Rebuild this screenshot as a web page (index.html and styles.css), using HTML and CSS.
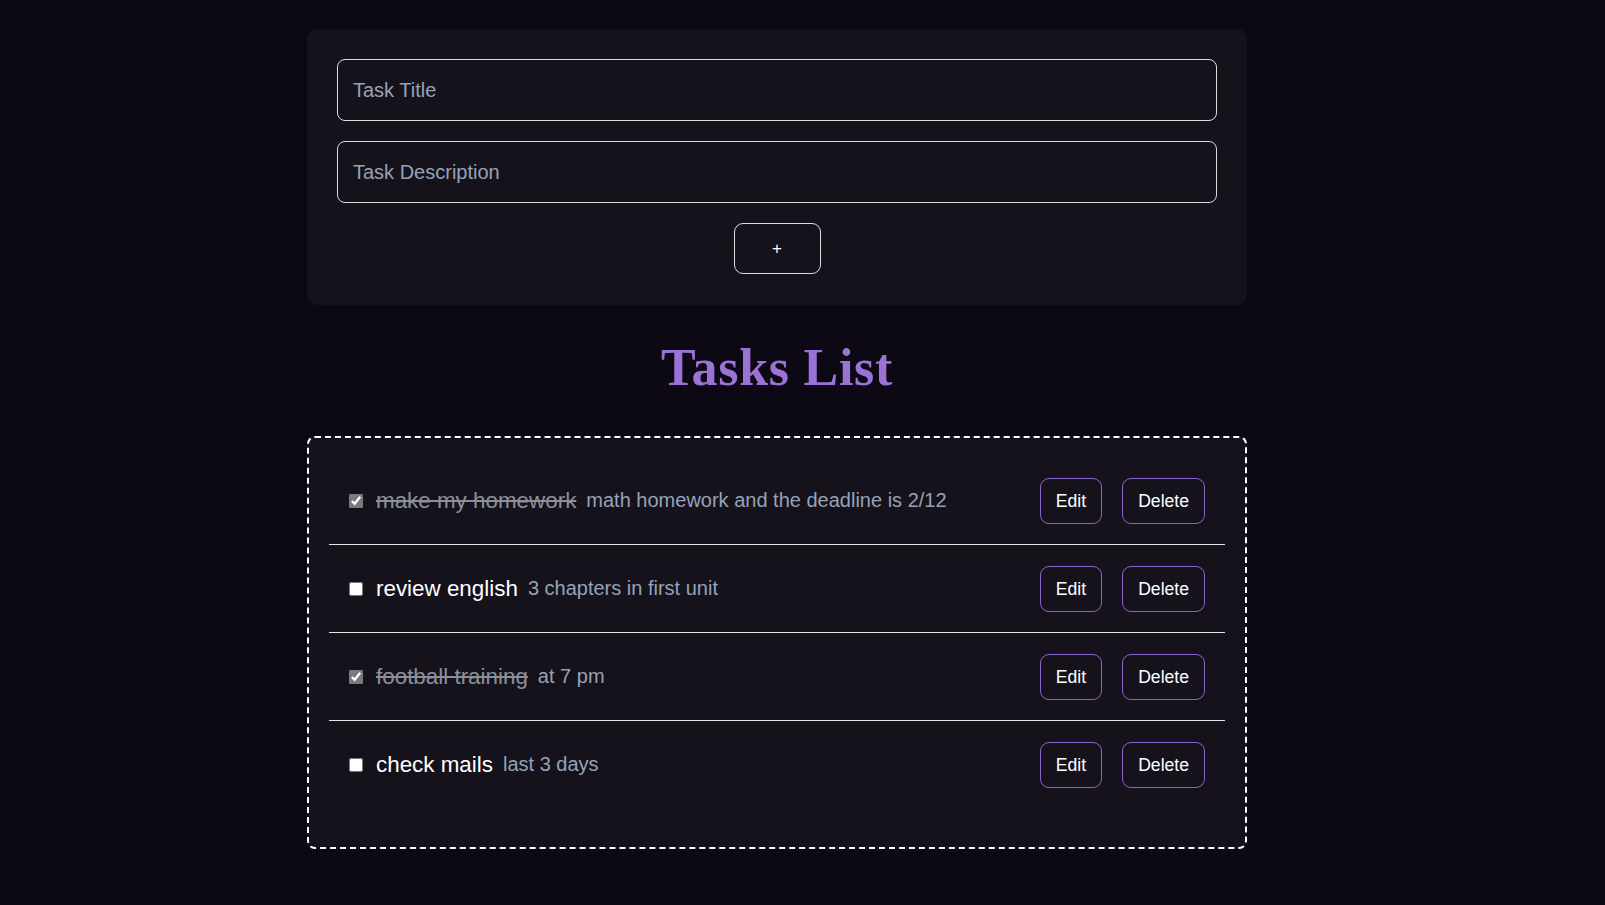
FILE: index.html
```html
<!DOCTYPE html>
<html lang="en">
<head>
<meta charset="UTF-8">
<title>Tasks</title>
<link rel="stylesheet" href="styles.css">
</head>
<body>
<div class="app">
  <form class="task-form">
    <input class="field" type="text" placeholder="Task Title">
    <input class="field" type="text" placeholder="Task Description">
    <button class="add-btn" type="button">+</button>
  </form>

  <h1 class="heading">Tasks List</h1>

  <ul class="task-list">
    <li class="task done">
      <div class="task-info">
        <input class="check" type="checkbox" checked>
        <span class="task-title">make my homework</span>
        <span class="task-desc">math homework and the deadline is 2/12</span>
      </div>
      <div class="actions">
        <button class="btn" type="button">Edit</button>
        <button class="btn" type="button">Delete</button>
      </div>
    </li>
    <li class="task">
      <div class="task-info">
        <input class="check" type="checkbox">
        <span class="task-title">review english</span>
        <span class="task-desc">3 chapters in first unit</span>
      </div>
      <div class="actions">
        <button class="btn" type="button">Edit</button>
        <button class="btn" type="button">Delete</button>
      </div>
    </li>
    <li class="task done">
      <div class="task-info">
        <input class="check" type="checkbox" checked>
        <span class="task-title">football training</span>
        <span class="task-desc">at 7 pm</span>
      </div>
      <div class="actions">
        <button class="btn" type="button">Edit</button>
        <button class="btn" type="button">Delete</button>
      </div>
    </li>
    <li class="task">
      <div class="task-info">
        <input class="check" type="checkbox">
        <span class="task-title">check mails</span>
        <span class="task-desc">last 3 days</span>
      </div>
      <div class="actions">
        <button class="btn" type="button">Edit</button>
        <button class="btn" type="button">Delete</button>
      </div>
    </li>
  </ul>
</div>
</body>
</html>
```

FILE: styles.css
```css
* {
  box-sizing: border-box;
}

html, body {
  margin: 0;
  padding: 0;
}

body {
  background: #0c0814;
  font-family: "Liberation Sans", Arial, sans-serif;
  color: #ffffff;
  min-height: 905px;
}

.app {
  width: 940px;
  margin: 0 0 0 307px;
  padding-top: 29px;
}

.task-form {
  background: #16121c;
  border-radius: 10px;
  padding: 30px 30px 31px;
  display: flex;
  flex-direction: column;
  align-items: center;
  gap: 20px;
}

.field {
  width: 100%;
  height: 62px;
  background: #16121c;
  border: 1px solid #dcdcdc;
  border-radius: 8px;
  padding: 0 15px;
  font-family: "Liberation Sans", Arial, sans-serif;
  font-size: 20px;
  color: #ffffff;
  outline: none;
}

.field::placeholder {
  color: #94a3b8;
}

.add-btn {
  width: 87px;
  height: 51px;
  background: #16121c;
  border: 1px solid #dcdcdc;
  border-radius: 9px;
  color: #ffffff;
  font-family: "Liberation Sans", Arial, sans-serif;
  font-size: 17px;
  padding: 0;
}

.heading {
  margin: 37.5px 0 43.5px;
  text-align: center;
  font-family: "Liberation Serif", "Times New Roman", serif;
  font-weight: bold;
  font-size: 52px;
  line-height: 50px;
  letter-spacing: 0.7px;
  color: #9b72d6;
}

.task-list {
  list-style: none;
  margin: 0;
  padding: 19px 20px 39px;
  background: #16121c;
  border: 2px dashed #ffffff;
  border-radius: 8px;
}

.task {
  display: flex;
  align-items: center;
  justify-content: space-between;
  padding: 20.5px 20px;
  border-bottom: 1px solid #e6e6e6;
}

.task:last-child {
  border-bottom: none;
}

.task-info {
  display: flex;
  align-items: center;
}

.check {
  margin: 0 13px 0 0;
  width: 14px;
  height: 14px;
  accent-color: #7a7a7a;
}

.task-title {
  font-size: 22.4px;
  color: #ffffff;
}

.done .task-title {
  color: #8a8f99;
  text-decoration: line-through;
}

.task-desc {
  margin-left: 10px;
  font-size: 20px;
  color: #94a3b8;
}

.actions {
  display: flex;
  gap: 20px;
}

.btn {
  background: transparent;
  border: 1px solid #8a63c9;
  border-radius: 9px;
  color: #ffffff;
  font-family: "Liberation Sans", Arial, sans-serif;
  font-size: 17.6px;
  line-height: 20px;
  padding: 12px 15px;
}
```
